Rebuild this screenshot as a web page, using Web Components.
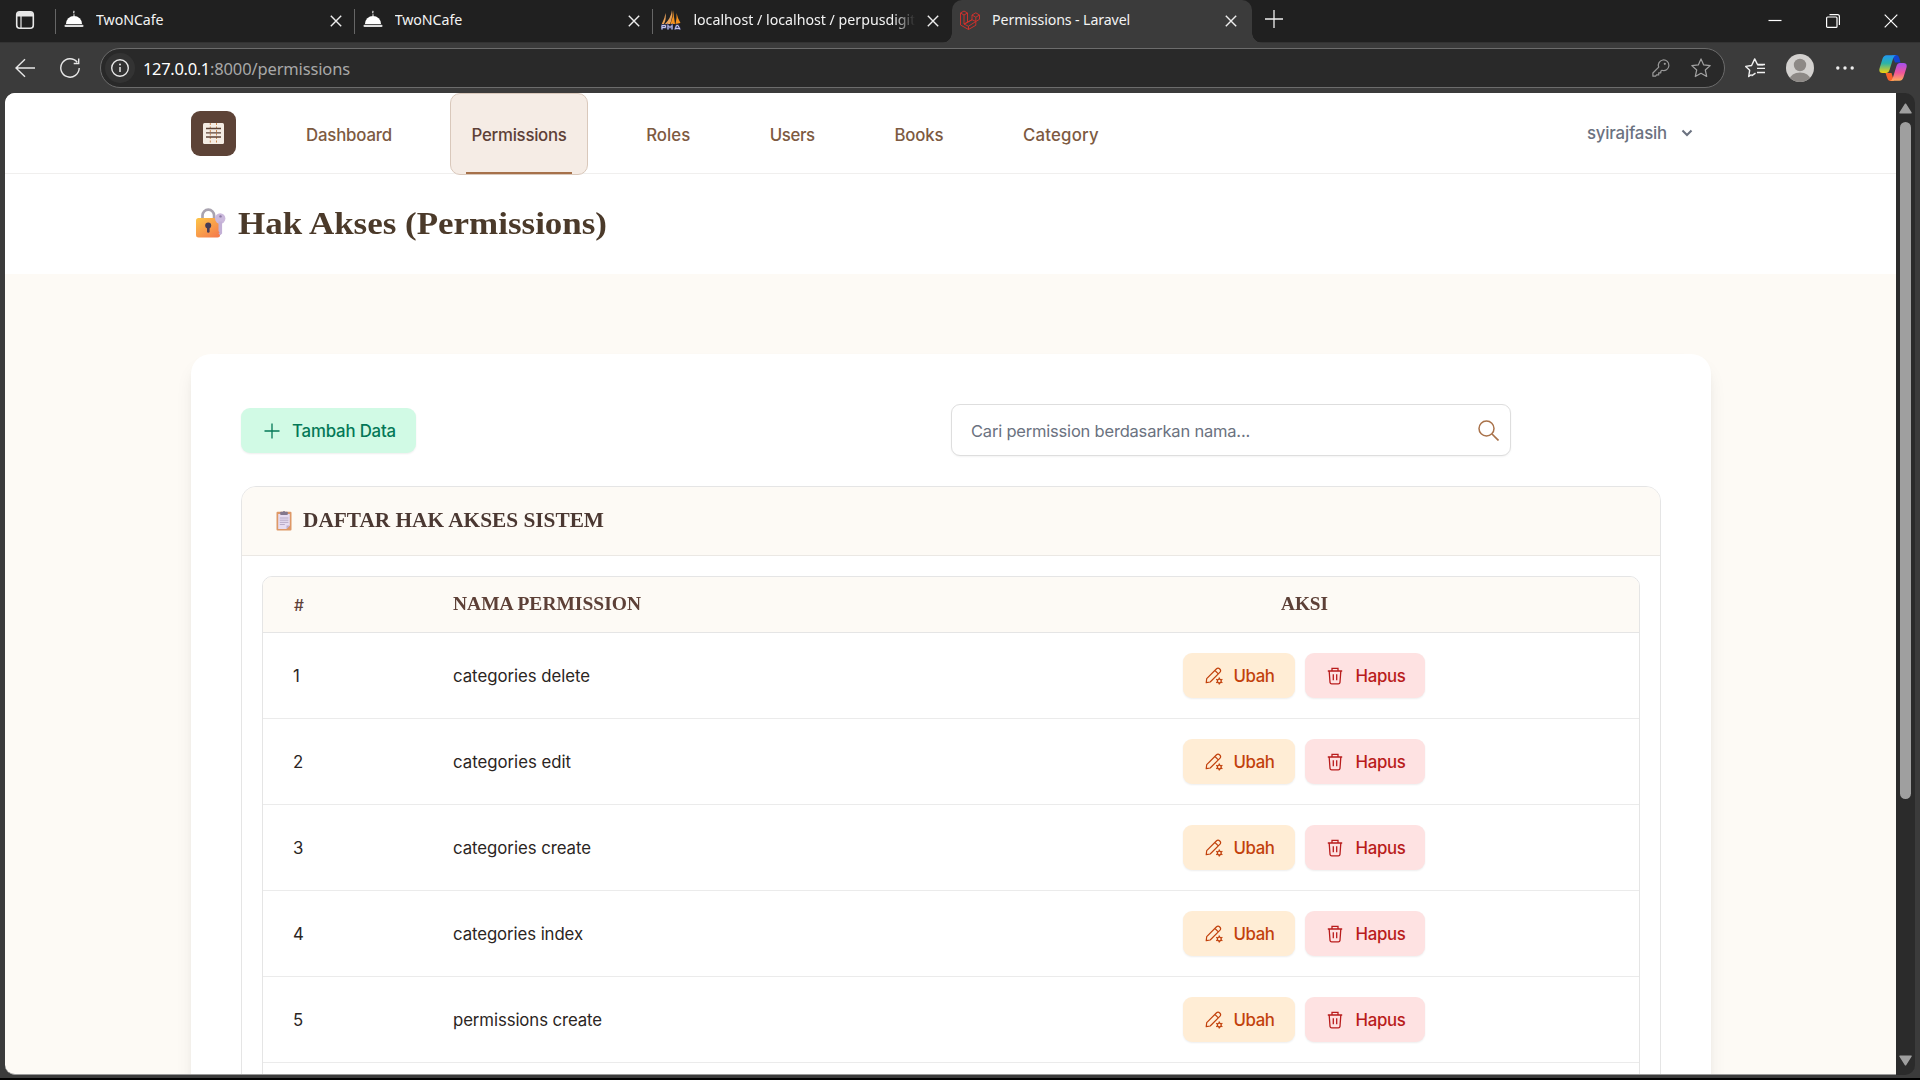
<!DOCTYPE html>
<html lang="id">
<head>
<meta charset="utf-8">
<title>Permissions - Laravel</title>
<style>
html,body{margin:0;height:100%;overflow:hidden;background:#000}
body{font-family:Inter,"Liberation Sans",sans-serif}
</style>
</head>
<body>
<browser-window></browser-window>
<script>
const ICONS = {
  tabs:['0 0 20 20',`<rect x="1.7" y="1.7" width="16.6" height="16.6" rx="3" fill="none" stroke="#e8e8e8" stroke-width="1.6"/><path d="M2 5a3 3 0 0 1 3-3h10a3 3 0 0 1 3 3v1.5H2z" fill="#e8e8e8"/><path d="M6 6v12" stroke="#e8e8e8" stroke-width="1.2"/>`],
  cloche:['0 0 20 20',`<path d="M2 14a8 8 0 0 1 16 0z" fill="#fff"/><rect x=".5" y="14.8" width="19" height="2.2" rx="1.1" fill="#ddd"/><path d="M10 6V4.300M10.300 3.200q-1.300-.8 0-2.400" stroke="#ddd" stroke-width="1.200" fill="none"/>`],
  pma:['0 0 20 20',`<path d="M4.500 3Q5.500 9 3 14H.8Q4 8 4.500 3zM11 0Q12 7 9 14H4Q10 8 11 0z" fill="#e9a25a"/><path d="M12 0L14 14H9.500Q12.500 7 12 0zM15.500 3Q16.500 8 19.500 13L14.500 14Q16 8 15.500 3z" fill="#f6921e"/><path d="M1 19.500v-4h3.500v2H1M7 19.500v-4l2 2 2-2v4M14 19.500l1.500-4h1.500l2 4M14.500 18.500h4" stroke="#51538c" stroke-width="2" fill="none"/><path d="M1 19.500v-4h3.500v2H1M7 19.500v-4l2 2 2-2v4M14 19.500l1.500-4h1.500l2 4M14.500 18.500h4" stroke="#d3d4ee" stroke-width=".9" fill="none"/>`],
  laravel:['0 0 20 20',`<path d="M.5 3L4 1l3.500 2v9.300l4.500-2.600V5l3.800-2.200L19.500 5v4.300L15.800 11.500v3.800L8.500 19.500.5 15zM.5 3L4 5l3.500-2M4 5v9l4.500 2.300v3.200M12 5l3.800 2.200L19.500 5M15.800 7.200v4.300L12 9.700M7.500 12.300L4 14M12 9.700l-8 4.500M15.800 11.500l-7.300 4.700" fill="none" stroke="#d8302b" stroke-width=".9"/>`],
  close:['0 0 12 12','<path d="M.8.8l10.400 10.400M11.200.8L.8 11.200" stroke="#eee" stroke-width="1.400"/>'],
  plus:['0 0 18 18','<path d="M9 0v18M0 9h18" stroke="#eee" stroke-width="1.300"/>'],
  min:['0 0 14 14','<path d="M.5 6.500h13" stroke="#fff" stroke-width="1.200"/>'],
  max:['0 0 14 14','<rect x=".6" y="3" width="10.400" height="10.400" rx="1" fill="none" stroke="#fff" stroke-width="1.200"/><path d="M3.500.7h8a1.900 1.900 0 0 1 1.900 1.900v8.300" fill="none" stroke="#fff" stroke-width="1.200"/>'],
  x:['0 0 14 14','<path d="M.7.7l12.600 12.600M13.300.7L.7 13.300" stroke="#fff" stroke-width="1.200"/>'],
  back:['0 0 20 20','<path d="M20 10H1M10 1.300L1 10l9 8.700" fill="none" stroke="#e8e8e8" stroke-width="1.400"/>'],
  reload:['0 0 20 20','<path d="M19.200 10a9.200 9.200 0 1 1-2-5.800M18.700.5v5h-5" fill="none" stroke="#e8e8e8" stroke-width="1.400"/>'],
  info:['0 0 20 20','<circle cx="10" cy="10" r="8.300" fill="none" stroke="#e8e8e8" stroke-width="1.400"/><path d="M10 9v5" stroke="#e8e8e8" stroke-width="1.500"/><circle cx="10" cy="6.500" r="1" fill="#e8e8e8"/>'],
  key:['0 0 18 18','<path d="M6.700 8.200A5.300 5.300 0 1 1 10 11.300L8.800 12.200v1.600H6.700v2.100H4.600l-1 1.300H.9V14z" fill="none" stroke="#9a9a9a" stroke-width="1.200" stroke-linejoin="round"/><circle cx="12.800" cy="4.800" r="1.100" fill="#9a9a9a"/>'],
  star:['0 0 20 20','<path d="M10 .9l2.700 6 6.500.7-4.900 4.400 1.400 6.500L10 15.300l-5.700 3.200 1.400-6.500L.8 7.600l6.500-.7z" fill="none" stroke="#a2a2a2" stroke-width="1.200" stroke-linejoin="round"/>'],
  favs:['0 0 20 20','<path d="M6.500 16.500l-2.800 2 1-6.300L.7 8.400l5.900-.9L9.700.9l2.900 5.800h5.800M10.500 15.200l-4 2.600" fill="none" stroke="#f2f2f2" stroke-width="1.400" stroke-linejoin="round"/><path d="M12 10.400h8M12 14.500h8M12.500 6.500h7.500" stroke="#f2f2f2" stroke-width="1.300"/>'],
  avatar:['0 0 28 28','<defs><clipPath id="a"><circle cx="14" cy="14" r="14"/></clipPath></defs><g clip-path="url(#a)"><path d="M0 0h28v28H0z" fill="#d3d1cf"/><circle cx="14" cy="11" r="6.200" fill="#8d8986"/><ellipse cx="14" cy="25.500" rx="10.200" ry="7" fill="#8d8986"/></g>'],
  dots:['0 0 18 6','<circle cx="1.800" cy="3" r="1.700" fill="#eee"/><circle cx="9" cy="3" r="1.700" fill="#eee"/><circle cx="16.200" cy="3" r="1.700" fill="#eee"/>'],
  copilot:['0 0 28 26',`<defs><linearGradient id="l" x1="0" y1="0" x2="0" y2="1"><stop offset="0" stop-color="#2197f3"/><stop offset=".45" stop-color="#2bb3a8"/><stop offset="1" stop-color="#f5d20a"/></linearGradient><linearGradient id="r" x1="0" y1="0" x2="0" y2="1"><stop offset="0" stop-color="#a450f0"/><stop offset=".55" stop-color="#f0559a"/><stop offset="1" stop-color="#ffab5c"/></linearGradient></defs><path d="M13 0h4.500q2 0 2.800 3l1.200 4.500h-5.500z" fill="#1344cf"/><path d="M6.500 18h6l2.500 8h-3.500q-2.500 0-3.300-3z" fill="#f7622b"/><path d="M7.500.3H17q-2.200.7-3 3.500L10.500 15q-.9 3-3.500 3H3.500q-4 0-3-4.500L3.500 3.800Q4.700.3 7.500.3z" fill="url(#l)"/><path d="M20.500 25.700H11q2.200-.7 3-3.500L17.500 11q.9-3 3.500-3h3.500q4 0 3 4.500l-3 9.700q-1.200 3.500-4 3.500z" fill="url(#r)"/>`],
  logo:['0 0 21 21','<rect width="21" height="21" rx="1.500" fill="#f4ece4"/><path d="M7.300 0v21M13.500 0v21" stroke="#c98850" stroke-width="1" stroke-dasharray="2 1.500"/><path d="M3 5.500h15M3 9.800h15M3 14h15" stroke="#5d4337" stroke-width="1.300"/>'],
  chevron:['0 0 12 8','<path d="M1.500 1.500L6 6l4.500-4.500" fill="none" stroke="#6b7280" stroke-width="2.100"/>'],
  lock:['0 0 30 30',`<defs><linearGradient id="k" x1="0" y1="0" x2=".8" y2="1"><stop offset="0" stop-color="#fdc648"/><stop offset="1" stop-color="#f57d4c"/></linearGradient></defs><path d="M6.500 11V7.500a5.800 5.800 0 0 1 11.600 0V11" fill="none" stroke="#a9a3b0" stroke-width="2.700"/><rect x="0" y="10" width="24" height="19.500" rx="2.500" fill="url(#k)"/><circle cx="12.200" cy="17.500" r="3" fill="#463c55"/><path d="M11 18h2.600v5.500a1.300 1.300 0 0 1-2.600 0z" fill="#463c55"/><circle cx="24.200" cy="10.500" r="5.200" fill="#cbb9dc"/><circle cx="24.500" cy="8.400" r="1.200" fill="#8d7aa5"/><path d="M22.500 13.500h3.600v12l-1.800 1.800-1.800-1.600 1-1.200-1-1.500z" fill="#c3b0d6"/>`],
  clip:['0 0 16 20','<rect x=".5" y=".8" width="15" height="18.700" rx="1" fill="#de9867"/><path d="M2.200 3h11.600v11.500L10.500 18H2.200z" fill="#e6dcf1"/><path d="M10.500 18v-3.500h3.300z" fill="#bdaed0"/><rect x="4.200" y=".8" width="7.600" height="3.300" rx=".8" fill="#83788e"/><circle cx="8" cy="1" r="1" fill="#83788e"/><path d="M3.800 7h8.600M3.800 9.200h8.600M3.800 11.400h8.600M3.800 13.500h5" stroke="#b2a5c3" stroke-width=".9"/>'],
  add:['0 0 16 16','<path d="M8 .5v15M.5 8h15" stroke="#047857" stroke-width="1.300"/>'],
  search:['0 0 21 21','<circle cx="8.500" cy="8.500" r="7.500" fill="none" stroke="#a9724a" stroke-width="1.500"/><path d="M14 14l6.500 6.500" stroke="#a9724a" stroke-width="1.700"/>'],
  pencil:['0 0 18 18','<path d="M1.200 15.700l.5-4L11.300 2a2.400 2.400 0 0 1 3.500 3.400L5.200 15z M10 3.500l3.300 3.300" fill="none" stroke="#c2410c" stroke-width="1.200" stroke-linejoin="round"/><circle cx="14.300" cy="14" r="1.900" fill="none" stroke="#c2410c" stroke-width="1.300"/><path d="M14.300 10.500v1.400M14.300 16.100v1.400M11.200 12.200l1.300.8M16.100 15l1.300.8M11.200 15.800l1.300-.8M16.100 13l1.300-.8" stroke="#c2410c" stroke-width="1.300"/>'],
  trash:['0 0 16 18','<path d="M.8 4h14.400M5 4V1.300h6V4M2.200 4.300l.8 11a1.700 1.700 0 0 0 1.700 1.500h6.600a1.700 1.700 0 0 0 1.700-1.500l.8-11M6.300 7.300v6M9.700 7.300v6" fill="none" stroke="#b91c1c" stroke-width="1.300"/>'],
  up:['0 0 13 11','<path d="M6.500 1.200L12 9.800H1z" fill="#9f9f9f" stroke="#9f9f9f" stroke-width="1.500" stroke-linejoin="round"/>'],
  down:['0 0 13 11','<path d="M6.500 9.800L12 1.200H1z" fill="#9f9f9f" stroke="#9f9f9f" stroke-width="1.500" stroke-linejoin="round"/>']
};

function define(name, css, html) {
  customElements.define(name, class extends HTMLElement {
    constructor(){ super(); this.attachShadow({mode:'open'}); }
    connectedCallback(){
      if (this.shadowRoot.firstChild) return;
      this.shadowRoot.innerHTML = `<style>*{box-sizing:border-box}${css}</style>${typeof html==='function' ? html(this) : html}`;
    }
  });
}

define('ui-icon', ':host{display:block;flex:none}svg{display:block}', el => {
  const [box, body] = ICONS[el.getAttribute('name')];
  const [, , bw, bh] = box.split(' ');
  return `<svg width="${bw}" height="${bh}" viewBox="${box}">${body}</svg>`;
});

define('browser-tab',
 `:host{display:flex;align-items:center;width:298.7px;height:42px;padding:0 13px 2px 8px;position:relative;flex:none;color:#f3f3f3;font:14.2px "Noto Sans","Open Sans",sans-serif}
  :host(:not([active]))::before{content:"";position:absolute;left:-1px;top:9px;width:1px;height:25px;background:#666}
  :host([active]){background:#3b3b3b;border-radius:10px 10px 0 0;width:300px;height:43px;padding-bottom:3px;padding-right:15px}
  :host([active])::before,:host([active])::after{content:"";position:absolute;bottom:0;width:10px;height:10px}
  :host([active])::before{left:-10px;background:radial-gradient(circle at 0 0,transparent 9.500px,#3b3b3b 10px)}
  :host([active])::after{right:-10px;background:radial-gradient(circle at 100% 0,transparent 9.500px,#3b3b3b 10px)}
  .t{flex:1;margin:0 0 2px 12px;overflow:hidden;white-space:nowrap}
  :host([fade]) .t{margin-right:12px;-webkit-mask-image:linear-gradient(90deg,#000 200px,transparent 222px)}
  .c{margin-top:2px}`,
 el => `<ui-icon name="${el.getAttribute('icon')}"></ui-icon><div class="t"><slot></slot></div><ui-icon class="c" name="close"></ui-icon>`);

define('tab-strip',
 `:host{display:flex;height:42px;background:#202020;align-items:flex-start}
  .first{margin:10px 21px 0 15px}
  .new{margin:10px 0 0 13px}
  .win{margin:14px 22px 0 auto;display:flex;gap:44px}`,
 `<ui-icon class="first" name="tabs"></ui-icon>
  <browser-tab icon="cloche"><fit-text w="67.5">TwoNCafe</fit-text></browser-tab>
  <browser-tab icon="cloche"><fit-text w="67.5">TwoNCafe</fit-text></browser-tab>
  <browser-tab icon="pma" fade><fit-text w="222">localhost / localhost / perpusdigit</fit-text></browser-tab>
  <browser-tab icon="laravel" active><fit-text w="138">Permissions - Laravel</fit-text></browser-tab>
  <ui-icon class="new" name="plus"></ui-icon>
  <div class="win"><ui-icon name="min"></ui-icon><ui-icon name="max"></ui-icon><ui-icon name="x"></ui-icon></div>`);

define('tool-bar',
 `:host{display:flex;height:51px;align-items:center;padding:0 13px 0 15px;background:#3b3b3b;border-top:1px solid #333;box-sizing:border-box}
  .re{margin:0 20px 0 25px}
  .bar{flex:1;height:40px;border:1px solid #6c6c6c;border-radius:20px;background:#292929;display:flex;align-items:center;padding:0 13px 0 4px;font:16.500px "Noto Sans","Open Sans",sans-serif;color:#a8a8a8}
  .i{width:30px;height:30px;border-radius:50%;background:#333;display:grid;place-items:center;margin-right:8px}
  .host{color:#fff}
  .key{margin:0 21px 0 auto}
  .r{display:flex;align-items:center;margin-left:20px}
  .av{margin:0 22px 0 21px}.co{margin-left:25px}`,
 `<ui-icon name="back"></ui-icon><ui-icon class="re" name="reload"></ui-icon>
  <div class="bar"><span class="i"><ui-icon name="info"></ui-icon></span><fit-text class="host" w="67">127.0.0.1</fit-text><fit-text w="140">:8000/permissions</fit-text>
  <ui-icon class="key" name="key"></ui-icon><ui-icon name="star"></ui-icon></div>
  <div class="r"><ui-icon name="favs"></ui-icon><ui-icon class="av" name="avatar"></ui-icon><ui-icon name="dots"></ui-icon><ui-icon class="co" name="copilot"></ui-icon></div>`);

define('nav-link',
 `:host{display:flex;align-items:center;height:82px;padding:1px 20px 0 21px;border:1px solid transparent;color:#7d5a41;font-weight:500;font-size:16.800px;position:relative;box-sizing:border-box}
  :host([active]){background:#f5ece5;border-color:#d9c8bb;border-radius:10px;color:#5d4037}
  :host([active])::after{content:"";position:absolute;left:15px;right:15px;bottom:0;height:2px;background:#a6714a}`,
 '<slot></slot>');

define('site-nav',
 `:host{display:flex;height:81px;padding:0 203px 0 186px;border-bottom:1px solid #f0efee;align-items:flex-start;background:#fff;position:relative;z-index:1;box-sizing:border-box}
  .logo{width:45px;height:45px;margin-top:18px;border-radius:9px;background:#5d4337;display:grid;place-items:center}
  nav{display:flex;gap:36.600px;margin-left:48px}
  .user{display:flex;height:80px;align-items:center;gap:14px;margin-left:auto;color:#6b7280;font-weight:500;font-size:16.800px}`,
 `<div class="logo"><ui-icon name="logo"></ui-icon></div>
  <nav><nav-link><fit-text w="86">Dashboard</fit-text></nav-link><nav-link active><fit-text w="95">Permissions</fit-text></nav-link><nav-link><fit-text w="44">Roles</fit-text></nav-link><nav-link><fit-text w="45">Users</fit-text></nav-link><nav-link><fit-text w="49">Books</fit-text></nav-link><nav-link><fit-text w="76">Category</fit-text></nav-link></nav>
  <div class="user"><fit-text w="80">syirajfasih</fit-text><ui-icon name="chevron"></ui-icon></div>`);

define('page-title',
 `:host{display:flex;align-items:center;height:100px;padding:0 191px 2px;background:#fff;gap:12px;box-sizing:border-box}
  h1{margin:0;font:bold 32px "Liberation Serif",serif;color:#4b3a2a}`,
 '<ui-icon name="lock"></ui-icon><h1><slot></slot></h1>');

define('action-button',
 `:host{display:flex;align-items:center;height:45px;border-radius:9px;font-weight:500;font-size:16.800px;box-shadow:0 1px 2px rgba(0,0,0,.07);box-sizing:border-box}
  :host([kind=add]){width:175px;background:#d1fae5;color:#047857;padding-left:23px;--g:12px}
  :host([kind=edit]){width:112px;background:#ffedd5;color:#c2410c;padding-left:22px;--g:10.500px}
  :host([kind=del]){width:120px;background:#fee2e2;color:#b91c1c;padding-left:22px;--g:12.500px}
  ui-icon{margin-right:var(--g)}
  slot{display:block;padding-top:1px}`,
 el => `<ui-icon name="${{add:'add',edit:'pencil',del:'trash'}[el.getAttribute('kind')]}"></ui-icon><slot></slot>`);

define('search-box',
 `:host{display:flex;align-items:center;justify-content:space-between;width:560px;height:52px;border:1px solid #dedede;border-radius:9px;background:#fff;padding:0 11px 0 19px;box-shadow:0 1px 2px rgba(0,0,0,.05);color:#6b7280;font-size:16.500px;box-sizing:border-box}
  slot{display:block;padding-top:1px}`,
 '<slot></slot><ui-icon name="search"></ui-icon>');

define('table-row',
 `:host{display:grid;grid-template-columns:160px 730px 242px;padding-left:30px;height:86px;align-items:center;border-bottom:1px solid #ebebeb;font-size:16.800px;color:#2b2523;box-sizing:border-box}
  .a{display:flex;gap:10px}`,
 el => el.hasAttribute('n') ? `<span>${el.getAttribute('n')}</span><fit-text w="${el.getAttribute('w')}">${el.getAttribute('label')}</fit-text>
  <div class="a"><action-button kind="edit"><fit-text w="41">Ubah</fit-text></action-button><action-button kind="del"><fit-text w="50">Hapus</fit-text></action-button></div>` : '');

define('table-head',
 `:host{display:grid;grid-template-columns:160px 730px 243px;padding:0 0 1px 30px;height:56px;align-items:center;border-bottom:1px solid #e5e5e5;background:#fdfaf5;font:bold 18px "Liberation Serif",serif;color:#5d4037;box-sizing:border-box;border-radius:9px 9px 0 0}
  .n{font:500 15.500px Inter,sans-serif;padding:2px 0 0 1px}
  .c{display:flex;justify-content:center}`,
 '<span class="n">#</span><fit-text stretch w="188">NAMA PERMISSION</fit-text><span class="c"><fit-text stretch w="47">AKSI</fit-text></span>');

define('data-panel',
 `:host{display:block;margin-top:30px;border:1px solid #e5e5e5;border-radius:15px;height:700px;box-sizing:border-box}
  .h{display:flex;align-items:center;height:69px;padding:0 0 1px 34px;gap:11px;background:#fdfaf5;border-bottom:1px solid #ebe8e4;border-radius:14px 14px 0 0;font:bold 20px "Liberation Serif",serif;color:#4b3832}
  .t{margin:20px 20px 0;border:1px solid #e5e5e5;border-radius:10px}`,
 `<div class="h"><ui-icon name="clip"></ui-icon><fit-text stretch w="301">DAFTAR HAK AKSES SISTEM</fit-text></div>
  <div class="t"><slot></slot></div>`);

define('content-card',
 `:host{display:block;margin:80px 185px 0 186px;height:900px;padding:50px;background:#fff;border-radius:20px;box-shadow:0 12.500px 19px -4px rgba(0,0,0,.1),0 5px 8px -5px rgba(0,0,0,.1);box-sizing:border-box}
  .top{display:flex;align-items:center;justify-content:space-between;padding-right:150px;height:52px}
  .top action-button{margin-top:1px}`,
 `<div class="top"><action-button kind="add"><fit-text w="104">Tambah Data</fit-text></action-button><search-box><fit-text w="279">Cari permission berdasarkan nama...</fit-text></search-box></div>
  <data-panel><table-head></table-head>
   <table-row n="1" label="categories delete" w="137"></table-row>
   <table-row n="2" label="categories edit" w="118"></table-row>
   <table-row n="3" label="categories create" w="138"></table-row>
   <table-row n="4" label="categories index" w="130"></table-row>
   <table-row n="5" label="permissions create" w="149"></table-row>
   <table-row></table-row>
  </data-panel>`);

define('scroll-bar',
 `:host{display:flex;flex-direction:column;align-items:center;width:19px;background:#2b2b2b;border-radius:0 10px 10px 0;padding:10px 0 9px;box-sizing:border-box}
  .thumb{width:11px;height:677px;border-radius:6px;background:#9f9f9f;margin-top:8px}
  .dn{margin-top:auto}`,
 '<ui-icon name="up"></ui-icon><div class="thumb"></div><ui-icon class="dn" name="down"></ui-icon>');

define('browser-window',
 `:host{display:block;width:1920px;height:1078px;background:#3b3b3b}
  .v{display:flex;margin-left:5px;width:1910px;height:982px}
  main{width:1891px;height:982px;overflow:hidden;border-radius:10px 0 0 10px;background:#fdfaf5;border-bottom:1px solid #999}`,
 `<tab-strip></tab-strip><tool-bar></tool-bar>
  <div class="v"><main><site-nav></site-nav><page-title><fit-text stretch w="369">Hak Akses (Permissions)</fit-text></page-title><content-card></content-card></main><scroll-bar></scroll-bar></div>`);

/* Text run that spans the width given in `w`: by tracking, or with `stretch` by widening the letters. */
customElements.define('fit-text', class extends HTMLElement {
  constructor(){ super(); this.attachShadow({mode:'open'}).innerHTML = '<style>:host{display:block;white-space:pre}span{display:inline-block;transform-origin:0 50%}</style><span><slot></slot></span>'; }
  connectedCallback(){
    const s = this.shadowRoot.querySelector('span'), w = +this.getAttribute('w');
    const natural = s.getBoundingClientRect().width;
    if (this.hasAttribute('stretch')) s.style.transform = `scaleX(${w / natural})`;
    else s.style.letterSpacing = (w - natural) / this.textContent.length + 'px';
    this.style.width = w + 'px';
  }
});
</script>
</body>
</html>
